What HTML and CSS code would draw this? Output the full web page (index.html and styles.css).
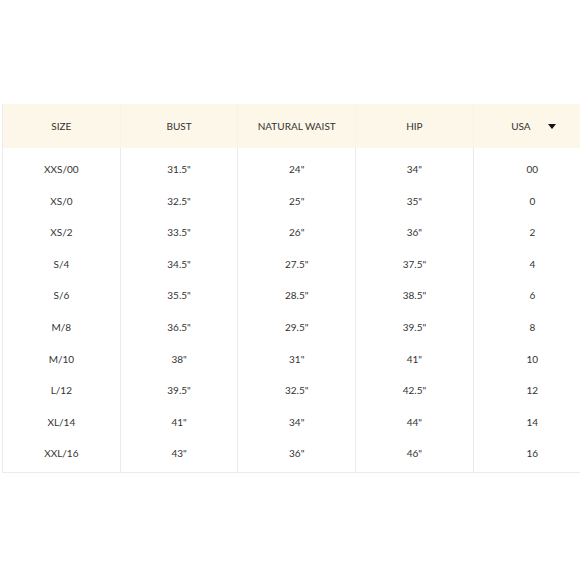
FILE: index.html
```html
<!DOCTYPE html>
<html>
<head>
<meta charset="utf-8">
<link rel="stylesheet" href="styles.css">
</head>
<body>
<div class="page">
<table class="chart">
<thead>
<tr>
<th>SIZE</th><th>BUST</th><th>NATURAL WAIST</th><th>HIP</th><th><span class="unit">USA<span class="caret"></span></span></th>
</tr>
</thead>
<tbody>
<tr class="first"><td>XXS/00</td><td>31.5"</td><td>24"</td><td>34"</td><td>00</td></tr>
<tr><td>XS/0</td><td>32.5"</td><td>25"</td><td>35"</td><td>0</td></tr>
<tr><td>XS/2</td><td>33.5"</td><td>26"</td><td>36"</td><td>2</td></tr>
<tr><td>S/4</td><td>34.5"</td><td>27.5"</td><td>37.5"</td><td>4</td></tr>
<tr><td>S/6</td><td>35.5"</td><td>28.5"</td><td>38.5"</td><td>6</td></tr>
<tr><td>M/8</td><td>36.5"</td><td>29.5"</td><td>39.5"</td><td>8</td></tr>
<tr><td>M/10</td><td>38"</td><td>31"</td><td>41"</td><td>10</td></tr>
<tr><td>L/12</td><td>39.5"</td><td>32.5"</td><td>42.5"</td><td>12</td></tr>
<tr><td>XL/14</td><td>41"</td><td>34"</td><td>44"</td><td>14</td></tr>
<tr class="last"><td>XXL/16</td><td>43"</td><td>36"</td><td>46"</td><td>16</td></tr>
</tbody>
</table>
</div>
</body>
</html>
```
FILE: styles.css
```css
html, body {
  margin: 0;
  padding: 0;
  background: #fff;
  overflow: hidden;
  width: 580px;
  height: 580px;
}
.page {
  padding: 104px 0 0 2px;
  width: 600px;
}
.chart {
  border-collapse: collapse;
  table-layout: fixed;
  width: 589px;
  font-family: "Lato", "Open Sans", sans-serif;
  font-size: 10px;
  color: #333;
  border-left: 1px solid #ebebeb;
  border-bottom: 1px solid #ebebeb;
}
.chart th {
  background: #fdf7e9;
  font-weight: 400;
  height: 44px;
  padding: 0;
  text-align: center;
  border-left: 1px solid #fbf3e1;
}
.chart th:first-child { border-left: none; }
.chart td {
  height: 31.6px;
  padding: 0;
  text-align: center;
  border-left: 1px solid #ebebeb;
}
.chart td:first-child { border-left: none; }
.chart tr.first td { height: 36.8px; padding-top: 5px; }
.chart tr.last td { height: 34.6px; padding-bottom: 3px; }
.chart tr.first td, .chart tr.last td { box-sizing: border-box; }
.unit {
  display: inline-flex;
  align-items: center;
  gap: 17px;
  margin-left: 2px;
}
.caret {
  width: 0;
  height: 0;
  border-left: 4px solid transparent;
  border-right: 4px solid transparent;
  border-top: 5px solid #111;
}
```
